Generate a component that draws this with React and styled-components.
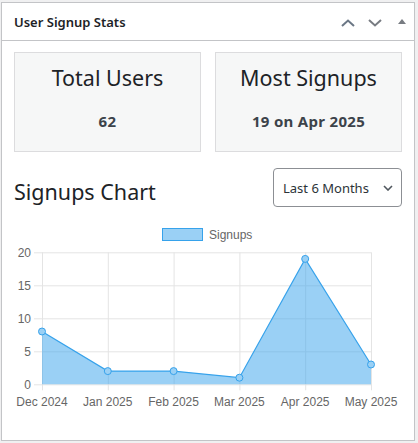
import styled, { createGlobalStyle } from "styled-components";

const GlobalStyle = createGlobalStyle`
    body {
        margin: 0;
        background: #f0f0f1;
        font-family: "Noto Sans", "Open Sans", sans-serif;
        color: #1d2327;
    }
`;

const signups = [
    { label: "Dec 2024", value: 8 },
    { label: "Jan 2025", value: 2 },
    { label: "Feb 2025", value: 2 },
    { label: "Mar 2025", value: 1 },
    { label: "Apr 2025", value: 19 },
    { label: "May 2025", value: 3 },
];

// plot area inside the chart svg
const LEFT = 28;
const RIGHT = 357;
const TOP = 32.3;
const BOTTOM = 164.3;
const MAX = 20;

const xAt = (i) => LEFT + (i * (RIGHT - LEFT)) / (signups.length - 1);
const yAt = (v) => BOTTOM - (v / MAX) * (BOTTOM - TOP);

function SignupsChart(){
    const points = signups.map((d, i) => `${xAt(i)},${yAt(d.value)}`).join(" ");
    const area = `${LEFT},${BOTTOM} ${points} ${RIGHT},${BOTTOM}`;

    return (
        <ChartSvg width="388" height="200" viewBox="0 0 388 200">
            <rect x="148.5" y="8.5" width="40" height="12" fill="rgba(54,162,235,0.5)" stroke="#36a2eb" strokeWidth="1" />
            <text x="195" y="19" fontSize="12" fill="#666">Signups</text>

            {[0, 5, 10, 15, 20].map(v => (
                <g key={v}>
                    <line x1="20" x2={RIGHT} y1={yAt(v) + 0.5} y2={yAt(v) + 0.5} stroke="#e4e4e4" />
                    <text x="17" y={yAt(v) + 4.5} fontSize="12" fill="#666" textAnchor="end">{v}</text>
                </g>
            ))}

            {signups.map((d, i) => (
                <g key={d.label}>
                    <line x1={xAt(i) + 0.5} x2={xAt(i) + 0.5} y1={TOP} y2={BOTTOM + 6} stroke="#e4e4e4" />
                    <text x={xAt(i)} y="186" fontSize="12" fill="#666" textAnchor="middle">{d.label}</text>
                </g>
            ))}

            <polygon points={area} fill="rgba(54,162,235,0.5)" />
            <polyline points={points} fill="none" stroke="#36a2eb" strokeWidth="1.2" />

            {signups.map((d, i) => (
                <circle key={i} cx={xAt(i)} cy={yAt(d.value)} r="3.5" fill="#9ad0f5" stroke="#36a2eb" strokeWidth="1" />
            ))}
        </ChartSvg>
    );
}

export default function App(){
    return (
        <>
            <GlobalStyle />
            <Postbox>
                <Header>
                    <Title>User Signup Stats</Title>
                    <Handles>
                        <svg width="14" height="8" viewBox="0 0 14 8">
                            <path d="M1 7 L7 1.5 L13 7" fill="none" stroke="#6b7785" strokeWidth="2" />
                        </svg>
                        <svg width="14" height="8" viewBox="0 0 14 8">
                            <path d="M1 1 L7 6.5 L13 1" fill="none" stroke="#787c82" strokeWidth="2" />
                        </svg>
                        <svg width="8" height="5" viewBox="0 0 8 5">
                            <path d="M0 5 L4 0 L8 5 Z" fill="#787c82" />
                        </svg>
                    </Handles>
                </Header>
                <Inside>
                    <Stats>
                        <StatBox>
                            <StatTitle>Total Users</StatTitle>
                            <StatValue>62</StatValue>
                        </StatBox>
                        <StatBox>
                            <StatTitle>Most Signups</StatTitle>
                            <StatValue>19 on Apr 2025</StatValue>
                        </StatBox>
                    </Stats>
                    <ChartHead>
                        <ChartTitle>Signups Chart</ChartTitle>
                        <Select>
                            <span>Last 6 Months</span>
                            <svg width="10" height="6" viewBox="0 0 10 6">
                                <path d="M1 1 L5 5 L9 1" fill="none" stroke="#50575e" strokeWidth="1.6" />
                            </svg>
                        </Select>
                    </ChartHead>
                    <SignupsChart />
                </Inside>
            </Postbox>
        </>
    );
}

const Postbox = styled.div `
    margin: 2px 0 0 1px;
    width: 414px;
    height: 439px;
    box-sizing: border-box;
    background: #fff;
    border: 1px solid #c3c4c7;
    box-shadow: 0 1px 1px rgba(0, 0, 0, 0.04);
`;

const Header = styled.div `
    height: 37px;
    display: flex;
    align-items: center;
    justify-content: space-between;
    padding: 0 8px 0 12px;
    border-bottom: 1px solid #c3c4c7;
`;

const Title = styled.h2 `
    margin: 0;
    font-size: 13px;
    font-weight: 600;
    color: #1d2327;
`;

const Handles = styled.div `
    display: flex;
    align-items: center;
    gap: 13px;
    padding-top: 2px;

    svg:last-child{
        margin-left: 3px;
        margin-top: -2px;
    }
`;

const Inside = styled.div `
    padding: 11px 11px 0 12px;
`;

const Stats = styled.div `
    display: grid;
    grid-template-columns: 187px 187px;
    gap: 14px;
`;

const StatBox = styled.div `
    height: 100px;
    box-sizing: border-box;
    background: #f6f7f7;
    border: 1px solid #dcdcde;
    text-align: center;
    padding-top: 9px;
`;

const StatTitle = styled.div `
    font-size: 21.5px;
    line-height: 32px;
    color: #1d2327;
`;

const StatValue = styled.div `
    margin-top: 17px;
    font-size: 15px;
    font-weight: 700;
    letter-spacing: 0.3px;
    color: #3c434a;
`;

const ChartHead = styled.div `
    display: flex;
    justify-content: space-between;
    align-items: flex-start;
    margin-top: 16px;
    padding-right: 1px;
`;

const ChartTitle = styled.h3 `
    margin: 9px 0 0 0;
    font-size: 21.5px;
    line-height: 30px;
    font-weight: 400;
    color: #1d2327;
`;

const Select = styled.div `
    width: 129px;
    height: 39px;
    box-sizing: border-box;
    border: 1px solid #8c8f94;
    border-radius: 4px;
    display: flex;
    align-items: center;
    justify-content: space-between;
    padding: 0 8px 0 9px;
    font-size: 13px;
    color: #2c3338;
`;

const ChartSvg = styled.svg `
    display: block;
    margin-top: 13px;
    font-family: "Liberation Sans", Arial, sans-serif;
`;
